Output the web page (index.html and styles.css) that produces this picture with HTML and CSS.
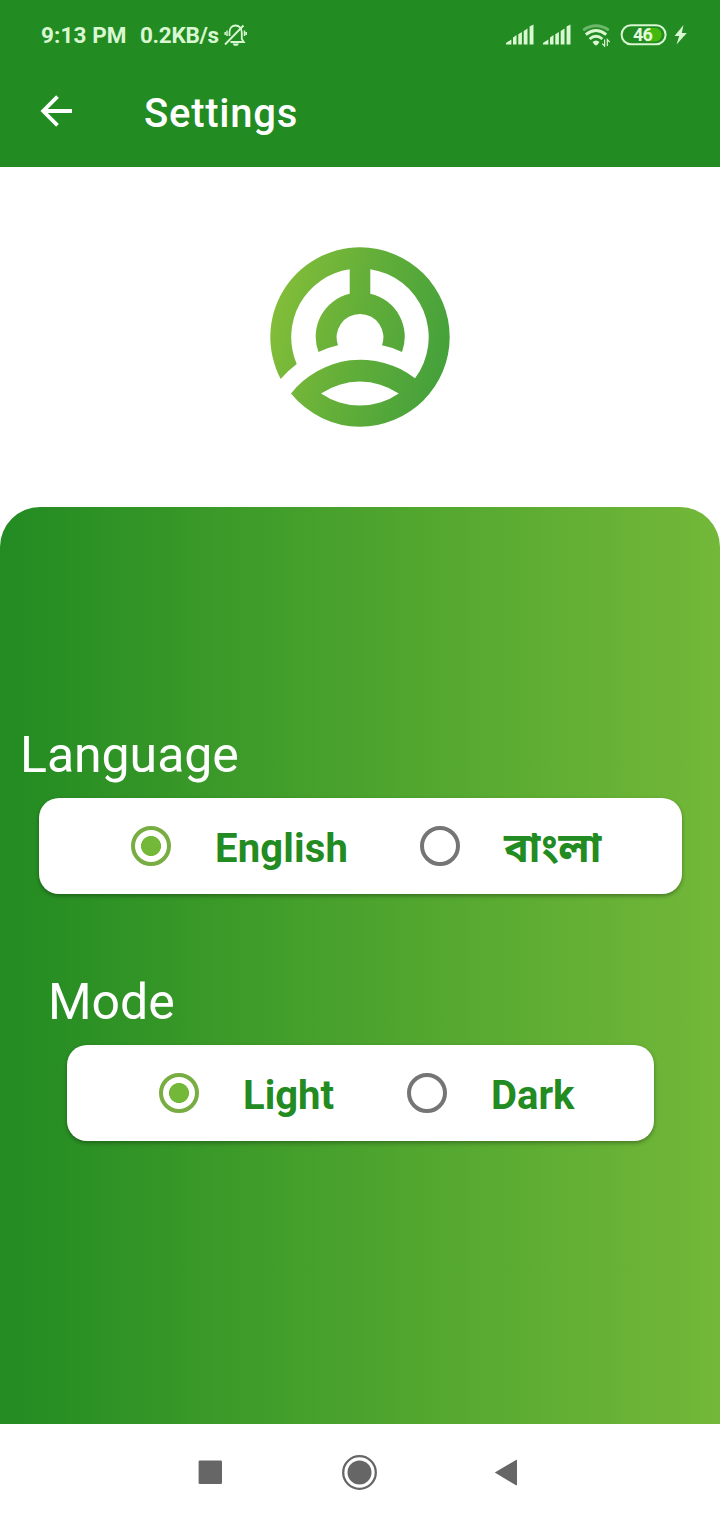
FILE: index.html
```html
<!DOCTYPE html>
<html lang="en">
<head>
<meta charset="utf-8">
<title>Settings</title>
<link rel="stylesheet" href="styles.css">
</head>
<body>
<div class="screen">
  <header class="header">
    <div class="status">
      <span class="clock">9:13 PM</span>
      <span class="speed">0.2KB/s</span>
      <svg class="bell" width="24" height="24" viewBox="0 0 24 24" fill="none" stroke="#d9f8d2" stroke-width="1.8">
        <path d="M7.500 19H20.800L18.800 16V9.500C18.800 5 16 2.500 12.500 2.500C9 2.500 6.500 5 6.500 9.500V13"/>
        <path d="M2 21.500L20.500 2.500"/>
        <path d="M4 7.500V13M2.200 9V12M21.500 7.500V13M23.200 9V12" stroke-width="1.500"/>
        <path d="M9.500 20.500H16L14.500 22.800H11Z" fill="#d9f8d2" stroke="none"/>
      </svg>
      <svg class="indicators" width="184" height="26" viewBox="0 -0.600 184 26" fill="#d9f8d2">
        <g id="signal"><path d="M0 20.500L5.400 16.800V22H0ZM7 14.800L10.500 12.500V22H7ZM12.300 11.700L15.900 9.300V22H12.300ZM17.700 8.300L21.500 5.800V22H17.700ZM23.600 4L27.500 1.800V22H23.600Z"/></g>
        <use href="#signal" x="37"/>
        <g fill="none" stroke="#d9f8d2" stroke-width="2.900">
          <path d="M77.200 7.500Q90 -1.200 102.800 7.500" opacity=".42"/>
          <path d="M79.800 12Q90 3.800 100.200 12"/>
          <path d="M83.600 16.400Q90 11 96.400 16.400"/>
        </g>
        <path d="M86.500 19.500Q90 16.500 93.500 19.500L91 22.700H89Z"/>
        <path d="M98.600 17V23.500L96.200 21M101.300 23.500V17L103.700 19.500" fill="none" stroke="#d9f8d2" stroke-width="1.200"/>
        <rect x="115.600" y="2.700" width="44" height="18.900" rx="9.450" fill="none" stroke="#d9f8d2" stroke-width="2"/>
        <path d="M140 5.500H149A6.700 6.700 0 0 1 149 18.900H140Z" fill="#44b80e"/>
        <text class="charge" x="127" y="18.400">46</text>
        <path d="M177.500 2.500L168.500 13.500H173.200L170.500 22L180.800 10.300H175.800Z"/>
      </svg>
    </div>
    <div class="toolbar">
      <svg class="back" width="34" height="34" viewBox="0 0 34 34" fill="none" stroke="#fff" stroke-width="3.800"><path d="M33 17H4M18.500 2.700L4.200 17L18.500 31.300"/></svg>
      <h1 class="title">Settings</h1>
    </div>
  </header>
  <section class="brand">
    <svg width="180" height="180" viewBox="0 0 180 180">
      <defs><linearGradient id="leaf" x1="0" y1=".3" x2="1" y2=".57"><stop offset="0" stop-color="#84be39"/><stop offset=".5" stop-color="#62ae39"/><stop offset="1" stop-color="#45a13b"/></linearGradient></defs>
      <path fill="url(#leaf)" fill-rule="evenodd" d="M10.700 131.900A89.700 89.700 0 0 1 90 .3A89.700 89.700 0 0 1 179.700 90A89.700 89.700 0 0 1 90 179.700A89.700 89.700 0 0 1 21 146.600A88.600 88.600 0 0 1 145 131.300A68.700 68.700 0 0 0 100.300 22.200V46.700A44 44 0 0 1 132 105Q123 100.500 112 98.300A23.400 23.400 0 1 0 68 98.300Q58 100.500 48.500 105A44 44 0 0 1 79.700 46.700V22.200A68.700 68.700 0 0 0 26.700 117Q18 123.500 10.700 131.900ZM51 146.500A69.600 69.600 0 0 1 128.800 146.500A68.700 68.700 0 0 1 51 146.500Z"/>
    </svg>
  </section>
  <main class="panel">
    <section class="group language">
      <h2 class="label">Language</h2>
      <div class="card">
        <label class="option first"><i class="radio on"></i><span class="english">English</span></label>
        <label class="option"><i class="radio"></i><span class="bangla" lang="bn">বাংলা</span></label>
      </div>
    </section>
    <section class="group mode">
      <h2 class="label">Mode</h2>
      <div class="card">
        <label class="option first"><i class="radio on"></i><span class="light">Light</span></label>
        <label class="option"><i class="radio"></i><span>Dark</span></label>
      </div>
    </section>
  </main>
  <nav class="navbar">
    <svg width="720" height="96" viewBox="0 0 720 96" fill="#666">
      <rect x="198.600" y="36.600" width="23.400" height="23.400" rx="1.200"/>
      <circle cx="359.500" cy="48.500" r="12"/>
      <circle cx="359.500" cy="48.500" r="16.300" fill="none" stroke="#666" stroke-width="2.300"/>
      <path d="M494.800 48.600L516 36Q517 35.500 517 36.600V60.600Q517 61.700 516 61.200Z"/>
    </svg>
  </nav>
</div>
</body>
</html>
```
FILE: styles.css
```css
* { box-sizing: border-box; }
body { margin: 0; background: #fff; font-family: Roboto, "Noto Sans", sans-serif; }
.screen { width: 720px; height: 1520px; display: flex; flex-direction: column; overflow: hidden; }
svg { display: block; flex: none; }
h1, h2 { margin: 0; }
.header { height: 167px; background: #228b22; }
.status { height: 70px; display: flex; align-items: center; padding-left: 41px; color: #d9f8d2; font-size: 22.5px; font-weight: 700; white-space: nowrap; }
.clock { width: 99px; letter-spacing: .1px; }
.speed { width: 83px; letter-spacing: -.3px; }
.indicators { margin-left: 259px; }
.charge { font: 700 18px Roboto, sans-serif; fill: #e5fadf; letter-spacing: -.8px; }
.toolbar { height: 97px; padding: 0 0 10px 39px; display: flex; align-items: center; }
.back { margin-bottom: 5px; }
.title { margin-left: 71px; color: #fff; font-size: 40px; font-weight: 500; line-height: 48px; letter-spacing: .75px; }
.brand { height: 340px; display: flex; justify-content: center; align-items: center; }
.panel { height: 917px; padding-top: 219px; border-radius: 40px 40px 0 0; background: linear-gradient(90deg, #228b22, #4ba32d 50%, #73b839); }
.group { height: 247px; }
.label { height: 72px; line-height: 58px; color: #fff; font-size: 50px; font-weight: 400; letter-spacing: -.05px; }
.language .label { padding-left: 20px; }
.mode .label { padding-left: 48px; }
.card { height: 96px; display: flex; align-items: center; border-radius: 20px; background: #fff; box-shadow: 0 2px 4px rgba(0,0,0,.32); }
.language .card { margin: 0 38px 0 39px; padding-left: 92px; }
.mode .card { margin: 0 66px 0 67px; padding-left: 92px; }
.option { display: flex; align-items: center; color: #228b22; font-size: 40px; font-weight: 700; line-height: 50px; white-space: nowrap; }
.radio { width: 40px; height: 40px; border: 4px solid #757575; border-radius: 50%; margin-right: 44px; flex: none; }
.radio.on { border-color: #78ad43; background: radial-gradient(circle, #73b839 9.700px, transparent 10.300px); }
.option span { padding-top: 5px; }
.english { width: 205px; letter-spacing: .15px; }
.light { width: 164px; }
.option .bangla { font-family: "Noto Sans Bengali", Roboto, sans-serif; font-size: 41px; padding-top: 12px; }
.navbar { height: 96px; }
```
